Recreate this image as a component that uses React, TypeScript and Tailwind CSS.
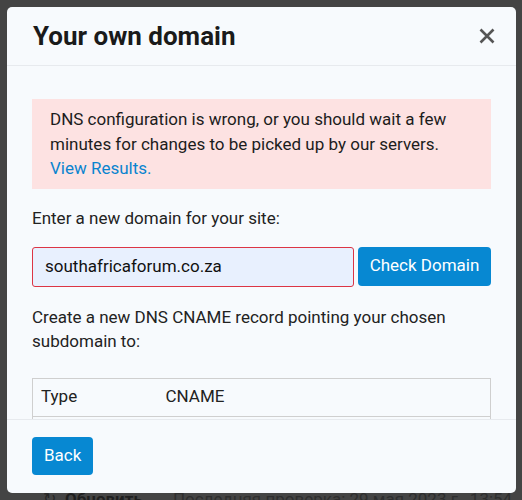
import React from 'react';

function CloseIcon() {
  return (
    <svg width="16" height="16" viewBox="0 0 16 16" fill="none">
      <path d="M1.5 1.5 L14.5 14.5 M14.5 1.5 L1.5 14.5" stroke="#555555" strokeWidth="2.6" strokeLinecap="butt" />
    </svg>
  );
}

export default function App() {
  return (
    <div
      className="relative h-[500px] w-[522px] overflow-hidden bg-[#444444]"
      style={{ fontFamily: 'Roboto, "Liberation Sans", sans-serif' }}
    >
      {/* page behind the overlay */}
      <div className="flex items-start whitespace-nowrap pt-[487px] text-[17px] leading-[24px] text-[#262626]">
        <span className="ml-[43px] mr-[9px] text-[16px]">↻</span>
        <span className="font-bold text-[#1f1f1f]">Обновить</span>
        <span className="ml-[30px] text-[#2e2e2e]">Последняя проверка: 29 мая 2023 г., 13:54</span>
      </div>

      {/* modal */}
      <div className="absolute left-[7px] top-[7px] flex h-[486px] w-[509px] flex-col overflow-hidden rounded-[5px] bg-[#f7fafd] text-[#222222]">
        <div className="flex h-[59px] shrink-0 items-center justify-between border-b border-[#e7eaee] pl-[26px] pr-[21px]">
          <h2 className="text-[26px] font-bold leading-[30px] text-[#1a1a1a]">Your own domain</h2>
          <CloseIcon />
        </div>

        <div className="h-[353px] shrink-0 overflow-hidden px-[25px] pt-[33px] text-[17px]">
          <div className="bg-[#fde2e2] px-[18px] py-[8px] leading-[24.5px] text-[#1c1c1c]">
            DNS configuration is wrong, or you should wait a few minutes for changes to be picked up by our servers.{' '}
            <a className="text-[#0a84cf]">View Results.</a>
          </div>

          <p className="mt-[17px] leading-[24px]">Enter a new domain for your site:</p>

          <div className="mt-[17px] flex gap-[4px]">
            <div className="flex h-[40px] w-[322px] items-center rounded-[3px] border border-[#dc3545] bg-[#e8f0fe] px-[12px] text-[#111111]">
              southafricaforum.co.za
            </div>
            <button className="h-[39px] flex-1 rounded-[4px] bg-[#0788d2] text-[17px] text-white">Check Domain</button>
          </div>

          <p className="mt-[18px] leading-[24px]">
            Create a new DNS CNAME record pointing your chosen subdomain to:
          </p>

          <table className="mt-[25px] w-full border-collapse border border-[#cfcfcf]">
            <tbody>
              <tr className="h-[38px] border-b border-[#cfcfcf]">
                <td className="w-[133px] pl-[8px]">Type</td>
                <td>CNAME</td>
              </tr>
              <tr className="h-[38px]">
                <td className="pl-[8px]">Name</td>
                <td>www</td>
              </tr>
            </tbody>
          </table>
        </div>

        <div className="flex flex-1 items-start border-t border-[#e7eaee] px-[25px] pt-[17px]">
          <button className="h-[38px] rounded-[4px] bg-[#0788d2] px-[12px] text-[17px] text-white">Back</button>
        </div>
      </div>
    </div>
  );
}
